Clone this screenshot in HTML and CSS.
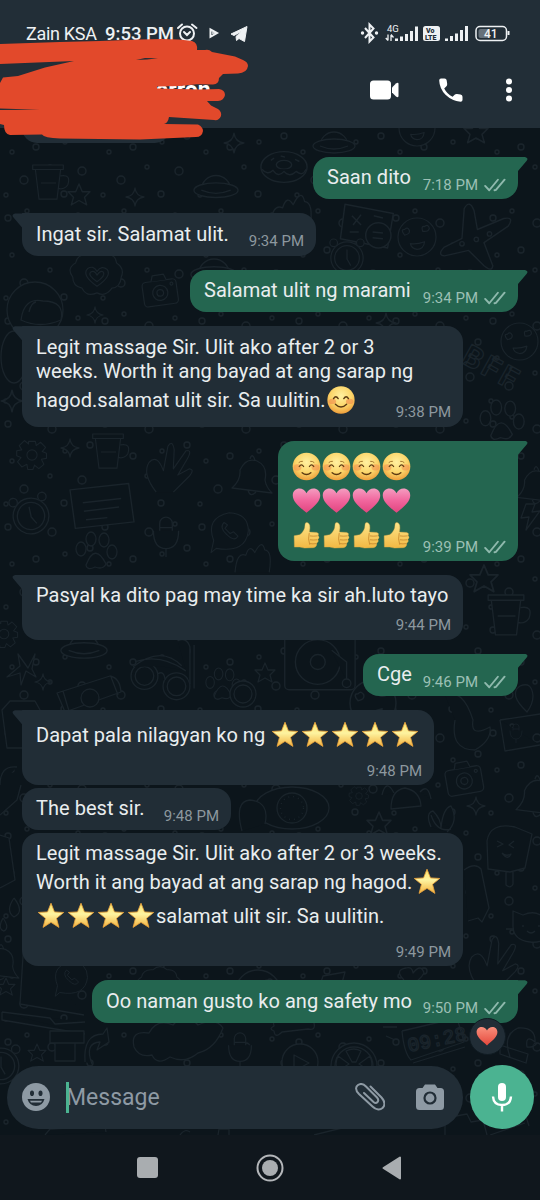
FILE: index.html
```html
<!DOCTYPE html>
<html lang="tl">
<head>
<meta charset="utf-8">
<title>Chat</title>
<link rel="stylesheet" href="styles.css">
</head>
<body>
<svg class="defs" width="0" height="0" aria-hidden="true">
  <defs>
    <linearGradient id="gStar" x1="0" y1="0" x2="0" y2="1"><stop offset="0" stop-color="#fbe36a"/><stop offset=".45" stop-color="#fdf3a0"/><stop offset="1" stop-color="#f3b23e"/></linearGradient>
    <radialGradient id="gFace" cx=".5" cy=".35" r=".65"><stop offset="0" stop-color="#fff0a0"/><stop offset=".6" stop-color="#fbd569"/><stop offset="1" stop-color="#ee9f3c"/></radialGradient>
    <linearGradient id="gPink" x1="0" y1="0" x2="0" y2="1"><stop offset="0" stop-color="#f49cc0"/><stop offset=".5" stop-color="#f1659d"/><stop offset="1" stop-color="#e0457f"/></linearGradient>
    <linearGradient id="gRed" x1="0" y1="0" x2="0" y2="1"><stop offset="0" stop-color="#f98f7c"/><stop offset="1" stop-color="#e5483c"/></linearGradient>
    <linearGradient id="gHand" x1="0" y1="0" x2="0" y2="1"><stop offset="0" stop-color="#fde58a"/><stop offset="1" stop-color="#f2b843"/></linearGradient>
    <symbol id="star" viewBox="0 0 30 30"><path d="M15 1.300 18.700 10.600 28.600 11.200 20.900 17.500 23.500 27.200 15 21.800 6.500 27.200 9.100 17.500 1.400 11.200 11.300 10.600Z" fill="url(#gStar)" stroke="#e9a33c" stroke-width=".9" stroke-linejoin="round"/></symbol>
    <symbol id="smile" viewBox="0 0 30 30"><circle cx="15" cy="15" r="14.600" fill="url(#gFace)"/><ellipse cx="5.700" cy="16.500" rx="4" ry="2.800" fill="#f28a4d" opacity=".6"/><ellipse cx="24.300" cy="16.500" rx="4" ry="2.800" fill="#f28a4d" opacity=".6"/><path d="M7 13.500q2.500-4 5 0M18 13.500q2.500-4 5 0M9 19.500q6 6 12 0" fill="none" stroke="#5b3a12" stroke-width="1.500" stroke-linecap="round"/></symbol>
    <symbol id="blush" viewBox="0 0 30 30"><circle cx="15" cy="15" r="14.300" fill="url(#gFace)"/><ellipse cx="5.700" cy="16" rx="4" ry="3.200" fill="#f2854d" opacity=".5"/><ellipse cx="24.300" cy="16" rx="4" ry="3.200" fill="#f2854d" opacity=".5"/><path d="M7.500 15q2.200-3.500 4.500 0M18 15q2.200-3.500 4.500 0" fill="none" stroke="#5b3a12" stroke-width="1.300" stroke-linecap="round"/><path d="M7.200 10.800q1.500-1.500 3.600-1.200M22.800 10.800q-1.500-1.500-3.600-1.200" fill="none" stroke="#9a6a24" stroke-width=".9" stroke-linecap="round"/><path d="M10.500 21.500q4.500 3.800 9 0" fill="none" stroke="#5b3a12" stroke-width="1.500" stroke-linecap="round"/></symbol>
    <symbol id="heart" viewBox="0 0 30 30"><path d="M15 27.800C9 22.500 .8 16.800 .8 9.700 .8 1.200 12 .3 15 7.500 18 .3 29.200 1.200 29.200 9.700 29.200 16.800 21 22.500 15 27.800Z"/></symbol>
    <symbol id="thumb" viewBox="0 0 30 30"><path d="M2.200 15.300 8 14.200Q13.500 10.500 13.500 3.700 13.600 1.300 15.600 1.500 19.800 2.300 18 11.500L25.500 11.800Q28.300 12.500 27 15 29 17 26.800 19 28 21.500 25.500 23 26 27 22 27.600L13 28 8 27 2.500 27Z" fill="url(#gHand)" stroke="#e2ab45" stroke-width=".4"/><path d="M18.500 15.400q3 .6 8 0M18.500 19.400q3 .6 7.800 0M18.500 23.400q3 .5 6.500 0M17.800 12.500q-1.500 6 .5 12" fill="none" stroke="#c98a2f" stroke-width=".9"/></symbol>
    <symbol id="ticks" viewBox="0 0 23 14"><path d="M1.200 8 5.500 12.500 14.500 1.500M11 12.500 12.500 12 21.500 1.500" fill="none" stroke="#8fb9ad" stroke-width="2" stroke-linecap="round" stroke-linejoin="round"/></symbol>

    <symbol id="dSpark" viewBox="-10 -10 20 20" overflow="visible"><path d="M0-9Q1-1 9 0 1 1 0 9-1 1-9 0-1-1 0-9Z"/></symbol>
    <symbol id="dStar" viewBox="-10 -10 20 20" overflow="visible"><path d="M0-10 3-3 10-3 5 2 7 9 0 5-7 9-5 2-10-3-3-3Z"/></symbol>
    <symbol id="dCam" viewBox="-20 -20 40 40" overflow="visible"><rect x="-18" y="-11" width="36" height="26" rx="4"/><path d="M-8-11-6-17H6L8-11"/><circle r="8" cy="2"/><circle r="3.500" cy="2"/><circle cx="13" cy="-6" r="1.500"/></symbol>
    <symbol id="dClock" viewBox="-20 -20 40 40" overflow="visible"><circle r="17"/><circle r="13"/><path d="M0-9V1L4 8"/><circle cx="-14" cy="-16" r="4"/><circle cx="14" cy="-16" r="4"/></symbol>
    <symbol id="dPlanet" viewBox="-20 -20 40 40" overflow="visible"><path d="M-14 4A14 14 0 1 1 14 4"/><ellipse cy="4" rx="21" ry="7"/><path d="M-14 4Q0 10 14 4"/></symbol>
    <symbol id="dFace" viewBox="-20 -20 40 40" overflow="visible"><circle r="20"/><path d="M-13-2q-5-6 0-6 3-3 5 1 1 4-5 5ZM6-6q-2-6 2-5 4-3 5 2-1 4-7 3ZM-7 7Q0 8 8 5 7 13 0 13-6 12-7 7Z"/></symbol>
    <symbol id="dPaw" viewBox="-20 -20 40 40" overflow="visible"><ellipse cx="-14" cy="-3" rx="5" ry="7"/><ellipse cx="-4" cy="-13" rx="5" ry="7"/><ellipse cx="9" cy="-12" rx="5" ry="7"/><ellipse cx="17" cy="0" rx="5" ry="7"/><path d="M-9 13Q0-10 11 12 8 18 0 15-8 19-9 13Z"/></symbol>
    <symbol id="dDonut" viewBox="-20 -20 40 40" overflow="visible"><ellipse rx="21" ry="14"/><ellipse rx="7" ry="4" cy="-2"/><path d="M-20 2q5 6 10 1 5 7 10 1 5 6 11 0 6 5 9-2M-12-6l3-2M10-7l4 2M-3-10l4 1"/></symbol>
    <symbol id="dPlane" viewBox="-30 -30 60 60" overflow="visible"><path d="M-8-24Q-3-33 1-22L4-5 28-15Q38-17 32-8L10 7 18 28Q17 34 10 28L-4 14-26 19Q-33 18-26 11L-10 3Z"/><circle cx="-10" cy="8" r="2"/><circle cx="3" cy="4" r="2"/><circle cx="15" cy="-1" r="2"/></symbol>
    <symbol id="dGear" viewBox="-20 -20 40 40" overflow="visible"><path d="M-4-16h8l1 5 5-4 6 6-4 5 5 2v6l-6 1 3 6-6 5-5-4-2 5h-6l-1-6-6 3-5-6 4-5-5-2v-6l6-1-3-5 6-6 5 4Z"/><circle r="6"/></symbol>
    <symbol id="dHeartBadge" viewBox="-30 -30 60 60" overflow="visible"><path d="M-9-24q9-8 18 0 11-1 12 9 9 6 5 15-1 11-10 12-7 10-16 5-11 5-16-5-10-2-10-12-7-9 3-15 2-10 14-9Z"/><path d="M0 10Q-17-2-10-9-4-13 0-6 5-13 11-8 16-1 0 10Z"/><path d="M0 5Q-10-2-7-5-3-8 0-2 4-8 7-5 9-1 0 5Z"/></symbol>
    <symbol id="dEgg" viewBox="-30 -30 60 60" overflow="visible"><ellipse rx="37" ry="21"/><circle r="15"/><circle r="8"/><circle r="11.500" stroke-dasharray="1 4"/></symbol>
    <symbol id="dGlasses" viewBox="-30 -30 60 60" overflow="visible"><circle cx="-16" cy="0" r="13"/><circle cx="-16" r="9"/><circle cx="15" cy="10" r="13"/><circle cx="15" cy="10" r="9"/><path d="M-27-9Q0-30 20-10M-25-14Q0-22 24-5M-3-2Q3-6 4 4M28 8V-28Q25-38 16-34M32 12V-30"/></symbol>
    <symbol id="dVinyl" viewBox="-30 -30 60 60" overflow="visible"><rect x="-34" y="-26" width="66" height="52" rx="4"/><circle r="21" cx="-3"/><circle r="7" cx="-3"/><path d="M10-11 24 0V18"/><circle cx="24" cy="20" r="4"/></symbol>
    <symbol id="dCup" viewBox="-20 -20 40 40" overflow="visible"><path d="M-14-15H14L10 18H-10ZM-17-15h34v-5h-34ZM14-8q12-2 8 10-4 6-11 4M-8 0H9"/></symbol>
    <symbol id="dFlame" viewBox="-20 -20 40 40" overflow="visible"><path d="M-20 16Q-18-8-8-3-4-16 2-6 10-22 13-9 22-8 18 16"/></symbol>
    <symbol id="dCalc" viewBox="-20 -20 40 40" overflow="visible"><path d="M-20-18 22-10 17 20-24 12ZM-14-8l8 8M-6-9l-7 9M-16 6h8M5-8l8 2"/><circle cx="9" cy="9" r="11"/><path d="M4 6l9 1M4 11l9 1"/></symbol>
    <symbol id="dLemon" viewBox="-20 -20 40 40" overflow="visible"><circle r="23"/><circle r="19"/><path d="M-2-4-8-15Q0-19 7-15L2-4ZM-5-2-16-10Q-20-1-16 5ZM5-2 16-10Q20-1 16 5Z"/></symbol>
    <symbol id="dCat" viewBox="-20 -20 40 40" overflow="visible"><path d="M-18 0-18-15-8-11Q3-16 11-10L21-14 19 4Q14 18-1 16-18 14-18 0Z"/><path d="M-8-1v2M8-1v2M-4 5q4 4 8 0M-25 3h8M19 6h8"/></symbol>
    <symbol id="dHand" viewBox="-30 -30 60 60" overflow="visible"><path d="M-12 28Q-28 7-20-5-11-15-4 4L1-23Q6-31 8-19L7 2 21-18Q29-20 22-8L12 9 25 2Q31 3 25 10L7 28"/></symbol>
    <symbol id="dLetter" viewBox="-30 -30 60 60" overflow="visible"><path d="M-30-16 25-22 30 14-25 20ZM-18-4 18-8M-17 4 16 0M-15 12 5 10"/></symbol>
    <symbol id="dBell" viewBox="-20 -20 40 40" overflow="visible"><path d="M-19 13Q-10 5-11-5-5-18 6-14 17-9 14 5 15 12 21 18ZM-3 15q2 8 8 2M-1-16q2-7 5 1"/></symbol>
    <symbol id="dMic" viewBox="-20 -20 40 40" overflow="visible"><rect x="-6" y="-18" width="12" height="23" rx="6"/><path d="M-12-5Q-12 12 0 12 12 12 12-5M0 12V20M-6-8H6"/></symbol>
    <symbol id="dPhone" viewBox="-30 -30 60 60" overflow="visible"><path d="M-17 20-23 25-20 11Q-30-15-2-21 20-20 20 0 17 26-17 20Z"/><path d="M-8-10q-6 6 3 14 9 9 13 2l-5-5-4 2-6-6 3-4Z"/></symbol>
    <pattern id="dots" width="97" height="103" patternUnits="userSpaceOnUse"><g fill="none" stroke="#1a242b" stroke-width="1.300"><circle cx="8" cy="12" r="3"/><circle cx="27" cy="5" r="2"/><circle cx="52" cy="17" r="4"/><circle cx="78" cy="9" r="2"/><circle cx="90" cy="33" r="3"/><circle cx="65" cy="39" r="2"/><circle cx="36" cy="44" r="3"/><circle cx="12" cy="49" r="2"/><circle cx="50" cy="64" r="2"/><circle cx="82" cy="68" r="4"/><circle cx="24" cy="77" r="4"/><circle cx="64" cy="91" r="3"/><circle cx="6" cy="92" r="2"/></g></pattern>
  </defs>
</svg>

<div class="phone">
  <header class="top">
    <div class="status">
      <span class="carrier">Zain KSA</span><span class="clock">9:53 PM</span>
      <svg class="st-left" width="74" height="22" viewBox="0 0 74 22"><g fill="none" stroke="#eef1f3" stroke-width="2"><circle cx="12" cy="11.500" r="7"/><path d="M9 10 12 13 15 10M3 6 7 2.500M17 2.500 21.500 6" stroke-linecap="round"/></g><path d="M35.500 7.500 42 11 35.500 14.800Z" fill="none" stroke="#eef1f3" stroke-width="2"/><path d="M37 11h3" stroke="#eef1f3" stroke-width="1.500"/><path d="M56 12 72 4.500 69.500 19.500 64 16.500 61.500 18.500 61 14.500 67 9 59 13.500Z" fill="#eef1f3" stroke="#eef1f3" stroke-linejoin="round"/></svg>
      <svg class="st-right" width="150" height="22" viewBox="0 0 150 22"><g fill="none" stroke="#eef1f3" stroke-width="2"><path d="M5 6 13.500 15.500 9.500 19.500V2.500L13.500 6.500 5 16"/></g><circle cx="2.500" cy="11" r="1.700" fill="#eef1f3"/><circle cx="16.500" cy="11" r="1.700" fill="#eef1f3"/><text x="27" y="9.500" class="tiny">4G</text><path d="M28 12.500V18.500M25.800 16 28 18.500M31 19V13M33.500 15.500 31 12.500" stroke="#eef1f3" stroke-width="1.300"/><path d="M35 16.500h3v2.500h-3zM40 14.500h3v4.500h-3zM45 12h3v7h-3zM50 9h3v10h-3zM55 4.500h3v14.500h-3zM85 16.500h3v2.500h-3zM90 14h3v5h-3zM95 11.500h3v7.500h-3zM100 8h3v11h-3zM105 4h3v15h-3z" fill="#eef1f3"/><rect x="63" y="4" width="17" height="15" rx="2.500" fill="#eef1f3"/><text x="66" y="11" class="lte">Vo</text><text x="65" y="18" class="lte">LTE</text><rect x="116" y="4.500" width="30.500" height="14" rx="4" fill="none" stroke="#eef1f3" stroke-width="1.500"/><rect x="118.500" y="7" width="11" height="9" rx="2" fill="#66717a"/><path d="M148.500 9v4" stroke="#eef1f3" stroke-width="2"/><text x="124" y="15.500" class="batt">41</text></svg>
    </div>
    <div class="bar">
      <span class="name">arron</span>
      <svg class="ico-video" width="29" height="20" viewBox="0 0 29 20" fill="#fff"><rect y=".5" width="21" height="19" rx="3.500"/><path d="M22 7.500 26 3.500Q28.500 2 28.500 4V16Q28.500 18 26 16.500L22 12.500Z"/></svg>
      <svg class="ico-call" width="24" height="24" viewBox="0 0 24 24" fill="#fff"><path d="M2 .5H5.500Q7.500.5 7.700 2.500L8.200 6Q8.300 7.500 7.200 8.500L5.200 10.400Q8 15.800 13.600 18.800L15.600 16.800Q16.500 15.800 18 16L21.500 16.400Q23.500 16.700 23.500 18.700V22Q23.500 23.700 21.500 23.700 13 23 6.500 16.800.5 10.500.2 2.500.2.500 2 .5Z"/></svg>
      <svg class="ico-more" width="8" height="24" viewBox="0 0 8 24" fill="#fff"><circle cx="4" cy="3.500" r="3"/><circle cx="4" cy="12" r="3"/><circle cx="4" cy="20.500" r="3"/></svg>
    </div>
  </header>

  <main class="chat">
    <svg class="doodles" width="540" height="1007" viewBox="0 128 540 1007" fill="none" stroke="#1a242b" stroke-width="1.300" stroke-linejoin="round">
      <rect y="128" width="540" height="1007" fill="url(#dots)" stroke="none"/>
      <g fill="#0c151b">
      <use href="#dPlanet" x="314" y="122" width="40" height="40"/><use href="#dFace" x="399" y="110" width="36" height="36"/><use href="#dStar" x="464" y="120" width="24" height="24"/><use href="#dDonut" x="262" y="145" width="44" height="44"/><use href="#dSpark" x="223" y="132" width="22" height="22"/><use href="#dCup" x="30" y="165" width="36" height="36"/><use href="#dPlanet" x="195" y="165" width="42" height="42"/><use href="#dStar" x="68" y="184" width="22" height="22"/><use href="#dSpark" x="125" y="187" width="20" height="20"/><use href="#dFlame" x="270" y="190" width="42" height="42"/><use href="#dCalc" x="345" y="202" width="46" height="46"/><use href="#dFace" x="398" y="218" width="38" height="38"/><use href="#dPlane" x="440" y="202" width="66" height="66"/><use href="#dClock" x="328" y="239" width="38" height="38"/>
      <use href="#dHeartBadge" x="69" y="249" width="56" height="56"/><use href="#dCam" x="141" y="272" width="38" height="38" transform="rotate(-8 160 291)"/><use href="#dPlanet" x="192" y="248" width="44" height="44"/><circle cx="35" cy="310" r="28"/><path d="M21 320Q24 297 43 301 65 301 61 320 40 329 21 320ZM29 312q2-9 7-10"/><use href="#dSpark" x="86" y="306" width="18" height="18"/><use href="#dFace" x="501" y="323" width="37" height="37"/><use href="#dSpark" x="375" y="312" width="22" height="22"/><use href="#dPaw" x="479" y="400" width="43" height="43"/><use href="#dSpark" x="0" y="389" width="24" height="24"/><ellipse cx="14" cy="357" rx="13" ry="26"/>
      <use href="#dGear" x="15" y="438" width="34" height="34"/><use href="#dSpark" x="60" y="438" width="20" height="20"/><use href="#dCup" x="90" y="434" width="36" height="36"/><use href="#dHand" x="140" y="440" width="54" height="54"/><use href="#dClock" x="10" y="495" width="42" height="42" transform="rotate(-12 31 516)"/><use href="#dBell" x="231" y="455" width="40" height="40"/><use href="#dLetter" x="70" y="475" width="64" height="64"/><use href="#dPhone" x="205" y="505" width="52" height="52"/><use href="#dMic" x="145" y="515" width="42" height="42"/><use href="#dPaw" x="75" y="532" width="40" height="40"/><use href="#dBell" x="516" y="466" width="38" height="38"/><path d="M526 504l-5 14 8-1-3 13 14-19-8 1 3-8Z"/><use href="#dFlame" x="235" y="540" width="36" height="36"/>
      <use href="#dStar" x="470" y="565" width="28" height="28"/><use href="#dCup" x="485" y="595" width="42" height="42"/><use href="#dGear" x="-12" y="618" width="32" height="32"/><path d="M18 654l10 14 7-14-3 15 4 8-10-6-5 14-1-12-13 4 13-11Z"/><use href="#dSpark" x="34" y="673" width="18" height="18"/><use href="#dPlanet" x="62" y="624" width="44" height="44"/><use href="#dGlasses" x="130" y="645" width="62" height="62"/><path d="M57 693 110 676Q120 678 121 692L65 712ZM63 691l6 20M111 677l7 18"/><circle cx="90" cy="698" r="9"/><use href="#dPaw" x="205" y="668" width="34" height="34"/><circle cx="243" cy="694" r="13"/><circle cx="243" cy="694" r="9"/><use href="#dVinyl" x="289" y="630" width="64" height="64"/><use href="#dStar" x="255" y="663" width="20" height="20"/><use href="#dFace" x="350" y="680" width="46" height="46"/>
      <path d="M2 710 10 701H35L40 710V748H7Z"/><path d="M0 785Q0 765 17 767M0 815l17-15 4-15"/><path d="M527 712Q508 694 520 686 532 681 533 696 533 704 527 712Z"/><path d="M455 720 Q450 750 475 750 492 740 490 727 470 738 473 720 463 688 445 695M500 720 540 714M500 720 505 751 540 745"/><use href="#dMic" x="506" y="722" width="20" height="22"/><use href="#dEgg" x="262" y="778" width="60" height="60"/><use href="#dCam" x="444" y="759" width="40" height="40" transform="rotate(-10 464 779)"/><use href="#dBell" x="515" y="775" width="42" height="42"/><use href="#dGear" x="348" y="785" width="22" height="22"/><use href="#dStar" x="367" y="812" width="24" height="24"/><use href="#dSpark" x="466" y="796" width="20" height="20"/><path d="M391 809Q391 790 405 788 420 791 421 806ZM382 795q4-17 12-2M420 792q8-9 11 7M431 827q-6-14 2-16 8 8 8 17 2-20 10-22 8 15-4 26M431 815q6 18 20 14"/><path d="M242 831q-8-30 8-31 20 2 15 24"/>
      <path d="M487 841Q490 822 515 827L532 834 525 868 510 872 488 869ZM506 872v13q5 4 7-1v-12M497 841l6 3-6 3M514 841l-5 4 5 3M502 853q4 4 9 1-3 7-9-1"/><use href="#dCat" x="511" y="906" width="40" height="40"/><use href="#dHand" x="462" y="933" width="58" height="58"/><path d="M464 870Q475 862 481 869L489 908 482 922 478 918 468 921"/><path d="M0 835 9 838 15 880 0 888M14 898Q5 911 14 917 25 912 14 898M3 918q-6 11 1 13 6-3-1-13"/><use href="#dBell" x="-18" y="944" width="36" height="36"/><use href="#dStar" x="-3" y="977" width="18" height="20"/><path d="M24 940 20 1004 84 1015M2 1012 50 1018 55 1024 85 1022M2 1012V1020L85 1034"/><use href="#dPhone" x="50" y="955" width="45" height="45"/><use href="#dHeartBadge" x="136" y="965" width="48" height="48"/><use href="#dFace" x="235" y="970" width="46" height="46"/><path d="M323 976 345 972 342 983 320 985ZM404 980q-10-10 2-12 6-2 7 5 8-10 11 0-4 8-15 12"/>
      <path d="M274 1026q-2-7 6-4l26-3q4-8 9-3 4 5-1 7 2 8-6 6l-26 3q-7 7-8-1-6-2 0-5Z"/><use href="#dLemon" x="334" y="1046" width="40" height="40"/><circle cx="300" cy="1062" r="18"/><path d="M294 1055v16l15-8Z"/><path d="M402 1031 457 1018 464 1042 411 1060Q404 1053 402 1031M413 1063 465 1047"/><path d="M384 1019l10-5M383 1027h14M386 1036l9 4"/><use href="#dClock" x="-20" y="1045" width="42" height="42"/><use href="#dStar" x="28" y="1043" width="18" height="20"/><path d="M50 1031h34v12H50ZM55 1043v18h20v-18M92 1064q-8-21 8-22l-3 8 12-8-2-14-4 6q-20 0-18 28"/><path d="M134 1047q-4-17 15-14 8-15 24-8 12-15 25 0 18-8 25 3-8 21-25 25-13 11-28 4-13 9-18-2-13 3-18-8Z"/><use href="#dMic" x="221" y="1031" width="38" height="38"/><path d="M510 1057q-8-22 8-29 18-1 17 14-10-8-8 5 6 1 10-4M500 1045l28 9-2 9-26-9Z"/>
      <path d="M45 1135l5-6 55-3 1 6M180 1135q5-7 10-3M218 1135l1-6h10v6M314 1135l28-7M445 1135v-17l22-4 4 8 12-2 4 15M490 1135l35-12M500 1118l24-8 5 16"/>
      </g>
      <text x="0" y="0" class="d-text" transform="translate(460 362) rotate(29)">BFF</text>
      <text x="0" y="0" class="d-digits" transform="translate(409 1052) rotate(-12)">09:28</text>
    </svg>

    <div class="thread">
      <div class="msg in cut"></div>
      <div class="msg out tail w205"><p>Saan dito</p><span class="time">7:18 PM<svg><use href="#ticks"/></svg></span></div>
      <div class="msg in tail w294"><p>Ingat sir. Salamat ulit.</p><span class="time">9:34 PM</span></div>
      <div class="msg out tail w328"><p>Salamat ulit ng marami</p><span class="time">9:34 PM<svg><use href="#ticks"/></svg></span></div>
      <div class="msg in tail w441 h100"><div class="lines"><p>Legit massage Sir. Ulit ako after 2 or 3</p><p>weeks. Worth it ang bayad at ang sarap ng</p><p class="gap5">hagod.salamat ulit sir. Sa uulitin.<svg class="emo"><use href="#smile"/></svg></p></div><span class="time">9:38 PM</span></div>
      <div class="msg out tail w240 h120"><div class="emoji-grid">
        <svg><use href="#blush"/></svg><svg><use href="#blush"/></svg><svg><use href="#blush"/></svg><svg><use href="#blush"/></svg>
        <svg class="pink"><use href="#heart"/></svg><svg class="pink"><use href="#heart"/></svg><svg class="pink"><use href="#heart"/></svg><svg class="pink"><use href="#heart"/></svg>
        <svg><use href="#thumb"/></svg><svg><use href="#thumb"/></svg><svg><use href="#thumb"/></svg><svg><use href="#thumb"/></svg>
      </div><span class="time">9:39 PM<svg><use href="#ticks"/></svg></span></div>
      <div class="msg in tail w441 h65"><p>Pasyal ka dito pag may time ka sir ah.luto tayo</p><span class="time">9:44 PM</span></div>
      <div class="msg out tail w155"><p>Cge</p><span class="time">9:46 PM<svg><use href="#ticks"/></svg></span></div>
      <div class="msg in tail w412 h75"><p class="gap5">Dapat pala nilagyan ko ng <svg class="emo"><use href="#star"/></svg><svg class="emo"><use href="#star"/></svg><svg class="emo"><use href="#star"/></svg><svg class="emo"><use href="#star"/></svg><svg class="emo"><use href="#star"/></svg></p><span class="time">9:48 PM</span></div>
      <div class="msg in near w209"><p>The best sir.</p><span class="time">9:48 PM</span></div>
      <div class="msg in near w441 h133"><div class="lines"><p>Legit massage Sir. Ulit ako after 2 or 3 weeks.</p><p class="gap5">Worth it ang bayad at ang sarap ng hagod.<svg class="emo"><use href="#star"/></svg></p><p class="gap10"><svg class="emo"><use href="#star"/></svg><svg class="emo"><use href="#star"/></svg><svg class="emo"><use href="#star"/></svg><svg class="emo"><use href="#star"/></svg>salamat ulit sir. Sa uulitin.</p></div><span class="time">9:49 PM</span></div>
      <div class="msg out tail w426"><p>Oo naman gusto ko ang safety mo</p><span class="time">9:50 PM<svg><use href="#ticks"/></svg></span><span class="reaction"><svg><use href="#heart"/></svg></span></div>
    </div>

    <div class="composer">
      <div class="field">
        <svg class="ico-emoji" width="28" height="28" viewBox="0 0 28 28"><circle cx="14" cy="14" r="14" fill="#8e9aa4"/><ellipse cx="10" cy="10.300" rx="2" ry="2.800" fill="#212d36"/><ellipse cx="18.500" cy="10.300" rx="2" ry="2.800" fill="#212d36"/><path d="M5.500 16h17Q20.500 23 14 23T5.500 16Z" fill="#212d36"/><path d="M8 17.800h12l-1 1.700H9Z" fill="#8e9aa4"/></svg>
        <span class="caret"></span><span class="placeholder">Message</span>
        <svg class="ico-clip" width="30" height="28" viewBox="0 0 30 28" fill="none" stroke="#8e9aa4" stroke-width="2" stroke-linecap="round"><path d="M15.500 3.500 26.500 14.500C30.500 19 30 22.500 27.500 25 24.500 27.500 20.500 26.500 17.500 23.500L4 11C-.5 6.500 1 3.500 3 2 6 0 9 1.500 11 3.500L22 14.500C25 18 21.500 21.500 18.500 19L9 10"/></svg>
        <svg class="ico-cam" width="28" height="26" viewBox="0 0 28 26"><path d="M9 .5H19L21.500 4H24.500Q28 4 28 7.500V22.500Q28 26 24.500 26H3.500Q0 26 0 22.500V7.500Q0 4 3.500 4H6.500Z" fill="#8e9aa4"/><circle cx="14" cy="14" r="5.500" fill="#8e9aa4" stroke="#212d36" stroke-width="2.200"/></svg>
      </div>
      <div class="mic"><svg width="22" height="29" viewBox="0 0 22 29"><rect x="7" y="0" width="8" height="18" rx="4" fill="#fff"/><path d="M2 13.500Q2.500 22 11 22 19.500 22 20 13.500M11 22V28.500" fill="none" stroke="#fff" stroke-width="2.400"/></svg></div>
    </div>
  </main>

  <nav class="nav">
    <span class="recent"></span>
    <svg class="home" width="28" height="28" viewBox="0 0 28 28"><circle cx="14" cy="14" r="12.500" fill="none" stroke="#b4b7ba" stroke-width="2"/><circle cx="14" cy="14" r="8" fill="#a9adb0"/></svg>
    <svg class="back" width="20" height="24" viewBox="0 0 20 24"><path d="M1.500 12 18 1.500V22.500Z" fill="#a9adb0" stroke="#a9adb0" stroke-width="2" stroke-linejoin="round"/></svg>
  </nav>

  <svg class="scribble" width="250" height="142" viewBox="0 0 250 142"><path fill="#e2492b" fill-rule="evenodd" d="M0 44 60 42 100 41 140 39.500Q175 38 192 41 198 43 197 50L205 50Q209 49 212 52L235 56.500 243 60Q248 62 248 66 247 73 238 73.500L223 74 219 78Q219 84 213 84.500L197 84.300 180 86 157 86.500 157 88.500 200 89.500 219 89Q225 90 225 95 224 100.500 218 101L207 101 211 105.500 218 109Q222 112 221 116 219 121 214 120L169 117Q168 123 164 124L198 124.500Q203 127 203 131 202 137 196 137L140 139.500 60 138.500Q44 138 42 134.500L10 135Q4 134 4 125L0 124V110L40 109.700 0 108.500V83L3 77.500 18 76 45 67.500 74 61 0 64ZM136 60 145 58 158 58.200 147 59.500Z"/></svg>
</div>
</body>
</html>
```
FILE: styles.css
```css
* { box-sizing: border-box; }
body { margin: 0; background: #0c151b; font-family: Roboto, "Liberation Sans", sans-serif; }
p { margin: 0; }
.defs { position: absolute; }
.phone { position: relative; width: 540px; height: 1200px; overflow: hidden; display: flex; flex-direction: column; }

.top { height: 128px; background: #222e37; display: flex; flex-direction: column; flex: none; }
.status { height: 54px; padding: 22px 30px 0 26px; display: flex; align-items: flex-start; color: #eef1f3; font-size: 18px; line-height: 24px; white-space: nowrap; }
.carrier { width: 79px; letter-spacing: -.3px; }
.clock { width: 70px; font-weight: 500; font-size: 18.500px; }
.st-left { margin: 0 auto 0 0; }
.tiny { font-size: 9.500px; fill: #eef1f3; }
.lte { font-size: 7px; font-weight: 900; fill: #222e37; }
.batt { font-size: 12px; font-weight: 500; fill: #eef1f3; }
.bar { height: 74px; display: flex; align-items: center; padding: 0 27px 2px 156px; }
.name { color: #fff; font-weight: 700; font-size: 23px; margin: 0 auto 0 0; }
.ico-call { margin-left: 40px; }
.ico-more { margin-left: 42px; }

.chat { position: relative; height: 1007px; flex: none; display: flex; flex-direction: column; background: #0c151b; }
.doodles { position: absolute; inset: 0; }
.d-text { font: 700 30px Roboto, sans-serif; letter-spacing: 3px; }
.d-digits { font: 20px "Liberation Mono", monospace; }
.thread { position: relative; height: 937px; padding: 0 22px; display: flex; flex-direction: column; align-items: flex-start; }

.msg { position: relative; display: grid; flex: none; height: 42.300px; margin-top: 14.100px; padding: 8.300px 12px 4.300px 14px; border-radius: 16px; color: #e9edef; font-size: 20px; letter-spacing: .035px; line-height: 24px; white-space: nowrap; }
.msg > * { grid-area: 1 / 1; }
.in { background: #212d36; }
.out { background: #246650; align-self: flex-end; }
.near { margin-top: 3px; }
.cut { width: 148px; height: 15px; margin-top: 0; border-radius: 0 0 16px 16px; padding: 0; }
.in.tail { border-top-left-radius: 0; }
.out.tail { border-top-right-radius: 0; }
.tail::before { content: ""; position: absolute; top: 0; width: 11px; height: 16px; background: inherit; }
.out.tail::before { left: calc(100% - 1px); clip-path: path("M0 0H8Q12 1 9.500 4L1 14V16H0Z"); }
.in.tail::before { right: calc(100% - 1px); clip-path: path("M11 0H3Q-1 1 1.500 4L10 14V16H11Z"); }

.w155 { width: 155px; } .w205 { width: 205px; } .w209 { width: 209px; } .w240 { width: 240px; }
.w294 { width: 294px; } .w328 { width: 328px; } .w412 { width: 412px; } .w426 { width: 426px; } .w441 { width: 441px; }
.h65 { height: 64.700px; } .h75 { height: 74.700px; } .h100 { height: 100.500px; } .h120 { height: 120px; } .h133 { height: 133px; }
.lines { display: flex; flex-direction: column; }
.lines p { height: 24px; }
.gap5 { margin-top: 5px; }
.gap10 { margin-top: 10px; }
.emo { width: 30px; height: 28px; margin: -8px 0; vertical-align: 1px; }
.emoji-grid { display: grid; grid-template-columns: repeat(4, 30px); grid-auto-rows: 34.500px; justify-items: center; margin: 2.500px 0 0 -.5px; align-content: start; }
.emoji-grid svg { width: 29px; height: 29px; }
.pink { fill: url(#gPink); }

.time { align-self: end; justify-self: end; display: flex; align-items: center; gap: 6px; color: #8d989f; font-size: 15px; line-height: 20px; letter-spacing: 0; }
.out .time { color: #9cc0b5; }
.time svg { width: 22px; height: 14px; }
.reaction { position: absolute; right: 12.500px; top: 37.500px; width: 37px; height: 37px; align-self: start; border-radius: 50%; background: #212d36; border: 1.500px solid #101b22; display: flex; align-items: center; justify-content: center; }
.msg > .reaction { grid-area: auto; }
.reaction svg { width: 22px; height: 22px; fill: url(#gRed); }

.composer { position: relative; display: flex; gap: 7px; padding: 0 6px 0 7px; height: 64px; align-items: center; }
.field { width: 456px; height: 63px; border-radius: 32px; background: #212d36; display: flex; align-items: center; padding: 0 19px 0 15px; }
.caret { width: 3px; height: 31px; margin: 0 -3px 0 16px; background: #4bb391; position: relative; }
.placeholder { color: #8e9aa4; font-size: 23px; margin: 1px auto 0 0; }
.ico-cam { margin-left: 31px; }
.mic { width: 64px; height: 64px; border-radius: 50%; background: #4bb391; display: flex; align-items: center; justify-content: center; }

.nav { height: 65px; flex: none; background: #10171d; display: flex; align-items: center; padding-left: 137px; }
.recent { width: 21px; height: 21px; border-radius: 3px; background: #a9adb0; }
.home { margin-left: 98px; }
.back { margin-left: 98px; }
.scribble { position: absolute; left: 0; top: 0; }
```
